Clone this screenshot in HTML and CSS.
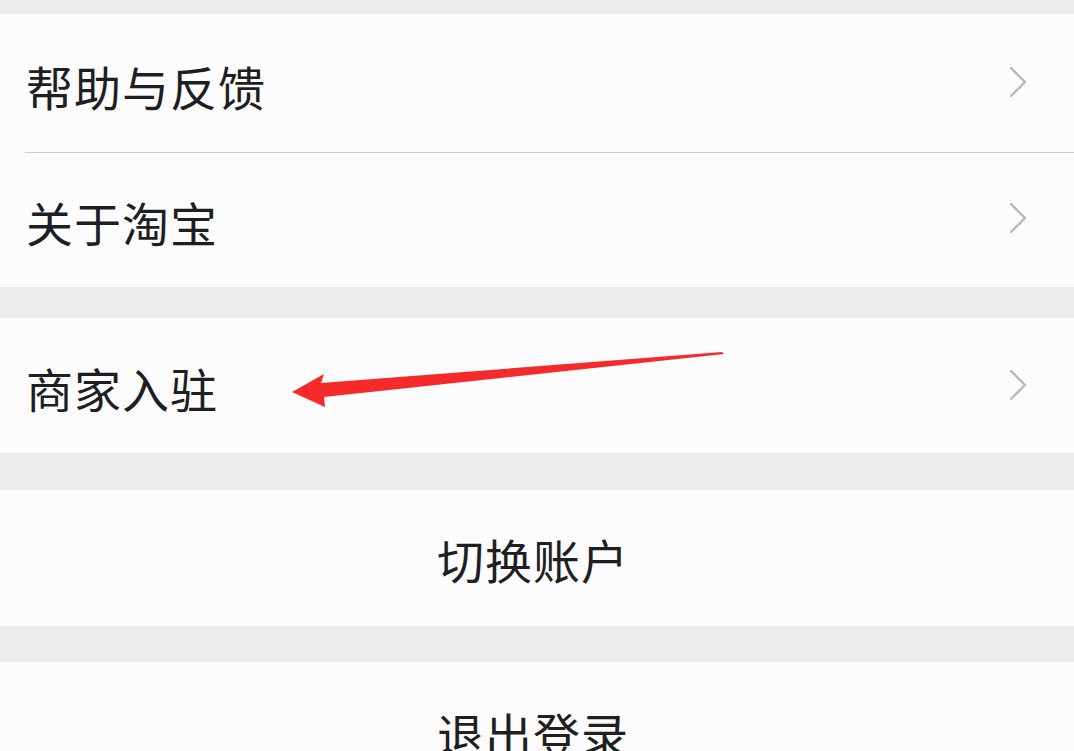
FILE: index.html
```html
<!DOCTYPE html>
<html lang="zh">
<head>
<meta charset="utf-8">
<link rel="stylesheet" href="styles.css">
</head>
<body>
<div class="page">
  <div class="top-gap"></div>
  <div class="group">
    <div class="row row-first">
      <span class="label">帮助与反馈</span>
      <svg class="chev" width="20" height="32" viewBox="0 0 20 32"><path d="M3 2 L17 16 L3 30" fill="none" stroke="#b9b9b9" stroke-width="2.4" stroke-linecap="round" stroke-linejoin="round"/></svg>
    </div>
    <div class="divider"></div>
    <div class="row row-second">
      <span class="label">关于淘宝</span>
      <svg class="chev" width="20" height="32" viewBox="0 0 20 32"><path d="M3 2 L17 16 L3 30" fill="none" stroke="#b9b9b9" stroke-width="2.4" stroke-linecap="round" stroke-linejoin="round"/></svg>
    </div>
  </div>
  <div class="gap gap-a"></div>
  <div class="group">
    <div class="row row-merchant">
      <span class="label">商家入驻</span>
      <svg class="chev" width="20" height="32" viewBox="0 0 20 32"><path d="M3 2 L17 16 L3 30" fill="none" stroke="#b9b9b9" stroke-width="2.4" stroke-linecap="round" stroke-linejoin="round"/></svg>
    </div>
  </div>
  <div class="gap gap-b"></div>
  <div class="group">
    <div class="row row-center row-switch"><span class="label">切换账户</span></div>
  </div>
  <div class="gap gap-c"></div>
  <div class="group">
    <div class="row row-center row-logout"><span class="label">退出登录</span></div>
  </div>
  <svg class="arrow" width="1074" height="751" viewBox="0 0 1074 751">
    <path d="M292 392 L324 374 L321 383 L722 352 L724 354 L324 397 L325 407 Z" fill="#f52a2a"/>
  </svg>
</div>
</body>
</html>
```

FILE: styles.css
```css
* { box-sizing: border-box; }
html, body {
  margin: 0;
  padding: 0;
  background: #ececec;
}
body {
  width: 1074px;
  height: 751px;
  overflow: hidden;
  font-family: "Noto Sans CJK SC", "Noto Sans", sans-serif;
  color: #1d1f22;
}
.page {
  position: relative;
  width: 1074px;
  height: 751px;
}
.top-gap { height: 14px; }
.group { background: #fcfcfc; }
.row {
  display: flex;
  align-items: center;
  justify-content: space-between;
  padding: 0 46px 0 26px;
}
.row-first { height: 138px; padding-top: 4px; }
.row-second { height: 134px; padding-top: 2px; }
.row-merchant { height: 135px; padding-top: 4px; }
.row-switch { height: 136px; padding-top: 4px; }
.row-logout { height: 140px; padding-top: 4px; }
.row-center { justify-content: center; padding: 0; }
.row-center .label { margin-left: -8px; }
.divider {
  height: 1px;
  background: #cfcfcf;
  margin-left: 25px;
}
.label {
  font-size: 47px;
  line-height: 1;
  letter-spacing: 1px;
}
.chev { display: block; margin-top: -6px; }
.gap-a { height: 31px; }
.gap-b { height: 37px; }
.gap-c { height: 36px; }
.arrow {
  position: absolute;
  left: 0;
  top: 0;
  pointer-events: none;
}
```
